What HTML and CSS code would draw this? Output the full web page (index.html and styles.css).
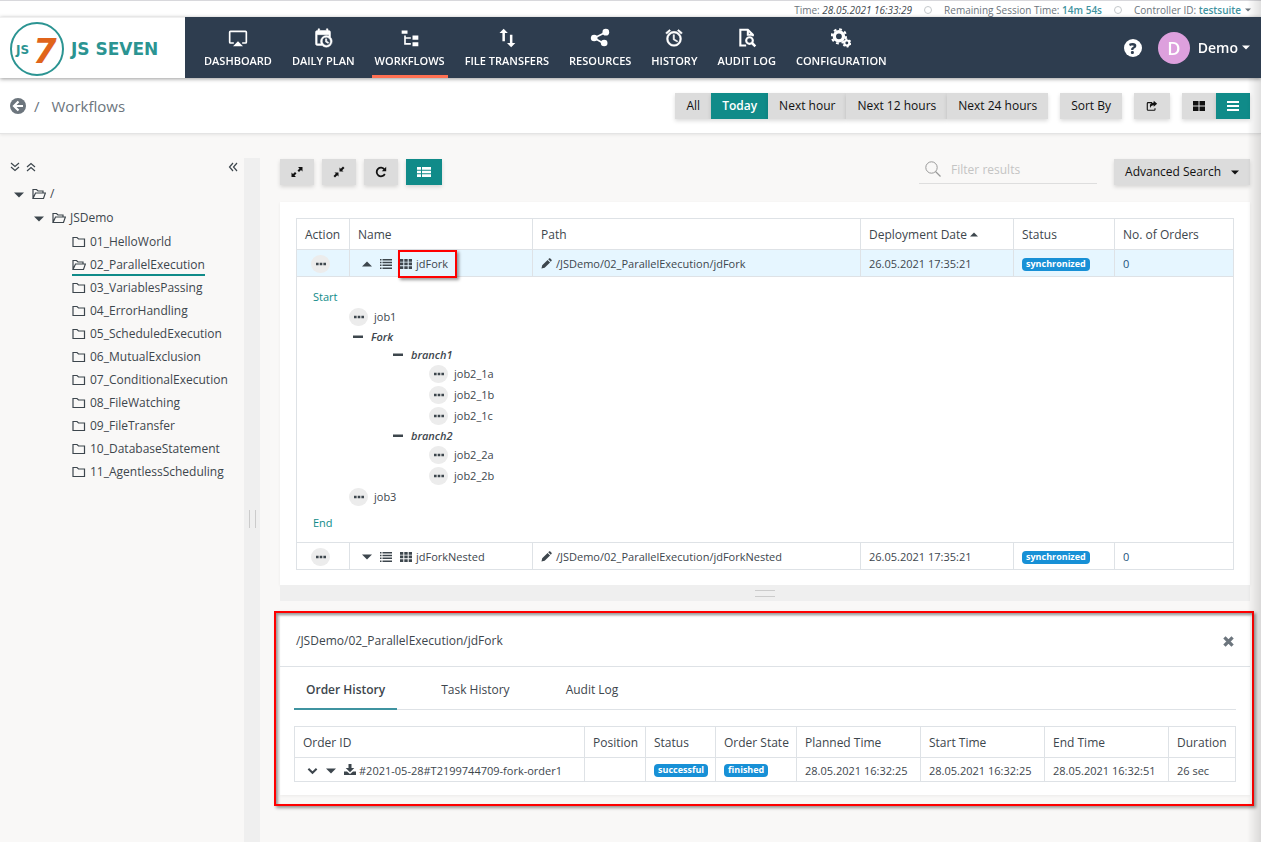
FILE: index.html
```
<!DOCTYPE html>
<html lang="en">
<head>
    <meta charset="UTF-8">
    <title>Workflows - JS7</title>
    <link rel="stylesheet" href="styles.css">
</head>
<body>
    <!-- icon sprite -->
    <svg class="sprite" aria-hidden="true">
        <symbol id="i-dashboard" viewBox="0 0 24 24"><path d="M6,22H18L12,16M21,3H3A2,2 0 0,0 1,5V17A2,2 0 0,0 3,19H7V17H3V5H21V17H17V19H21A2,2 0 0,0 23,17V5A2,2 0 0,0 21,3Z"/></symbol>
        <symbol id="i-plan" viewBox="0 0 24 24"><path d="M15,13H16.5V15.82L18.94,17.23L18.19,18.53L15,16.69V13M19,8H5V19H9.67C9.24,18.09 9,17.07 9,16A7,7 0 0,1 16,9C17.07,9 18.09,9.24 19,9.67V8M5,21C3.89,21 3,20.1 3,19V5C3,3.89 3.89,3 5,3H6V1H8V3H16V1H18V3H19A2,2 0 0,1 21,5V11.1C22.24,12.36 23,14.09 23,16A7,7 0 0,1 16,23C14.09,23 12.36,22.24 11.1,21H5M16,11.15A4.85,4.85 0 0,0 11.15,16C11.15,18.68 13.32,20.85 16,20.85A4.85,4.85 0 0,0 20.85,16C20.85,13.32 18.68,11.15 16,11.15Z" stroke="currentColor" stroke-width="0.600"/></symbol>
        <symbol id="i-tree" viewBox="0 0 24 24"><path d="M2,3H9V7H2V3M15,9H22V14H15V9M15,17H22V22H15V17M13,13H7V18H13V20H5V9H7V11H13V13Z"/></symbol>
        <symbol id="i-transfer" viewBox="0 0 24 24"><path d="M8,1L13,6H9.500V16H6.500V6H3L8,1M17,23L12,18H15.500V8H18.500V18H22L17,23Z"/></symbol>
        <symbol id="i-share" viewBox="0 0 24 24"><path d="M5,12L19,5M5,12L17,19" fill="none" stroke="currentColor" stroke-width="2"/><circle cx="5" cy="12" r="4"/><circle cx="19" cy="5" r="4"/><circle cx="17" cy="18" r="4"/></symbol>
        <symbol id="i-alarm" viewBox="0 0 24 24"><path d="M12,20A7,7 0 0,1 5,13A7,7 0 0,1 12,6A7,7 0 0,1 19,13A7,7 0 0,1 12,20M12,4A9,9 0 0,0 3,13A9,9 0 0,0 12,22A9,9 0 0,0 21,13A9,9 0 0,0 12,4M12.5,8H11V14L15.75,16.85L16.5,15.62L12.5,13.25V8M7.88,3.39L6.6,1.86L2,5.71L3.29,7.24L7.88,3.39M22,5.72L17.4,1.86L16.11,3.39L20.71,7.25L22,5.72Z" stroke="currentColor" stroke-width="0.600"/></symbol>
        <symbol id="i-audit" viewBox="0 0 24 24"><path d="M11,21H4V2H13L19,8V10M13,2V8H19" fill="none" stroke="currentColor" stroke-width="2.500"/><circle cx="15" cy="15" r="4" fill="none" stroke="currentColor" stroke-width="2.500"/><path d="M18,18L22,22" stroke="currentColor" stroke-width="3"/></symbol>
        <symbol id="i-cogs" viewBox="0 0 24 24"><circle cx="9.500" cy="10" r="5.500" fill="none" stroke="currentColor" stroke-width="4"/><circle cx="9.500" cy="10" r="8.500" fill="none" stroke="currentColor" stroke-width="2.500" stroke-dasharray="3.340 3.340"/><circle cx="19" cy="18" r="3" fill="none" stroke="currentColor" stroke-width="2.500"/><circle cx="19" cy="18" r="4.500" fill="none" stroke="currentColor" stroke-width="2" stroke-dasharray="2.360 2.360"/></symbol>
        <symbol id="i-back" viewBox="0 0 16 16"><circle cx="8" cy="8" r="8"/><path d="M8.500,3.500L4,8L8.500,12.500M4,8H13" fill="none" stroke="#fff" stroke-width="2.200"/></symbol>
        <symbol id="i-export" viewBox="0 0 14 14"><path d="M7,3H2.500Q1.500,3 1.500,4V11Q1.500,12 2.500,12H9.500Q10.500,12 10.500,11V9.500" fill="none" stroke="currentColor" stroke-width="1.300"/><path d="M9,1L13,4.500L9,8V6Q5.500,6 5,9.500Q3,3.500 9,3Z"/></symbol>
        <symbol id="i-large" viewBox="0 0 12 12"><path d="M0,1H5.500V5.500H0ZM6.500,1H12V5.500H6.500ZM0,6.500H5.500V11H0ZM6.500,6.500H12V11H6.500Z"/></symbol>
        <symbol id="i-bars" viewBox="0 0 12 12"><path d="M0,1H12V3H0ZM0,5H12V7H0ZM0,9H12V11H0Z"/></symbol>
        <symbol id="i-expand" viewBox="0 0 12 12"><path d="M7,1H11.500V5.500L10,4L8,6L6.500,4.500L8.500,2.500ZM5,11H0.500V6.500L2,8L4,6L5.500,7.500L3.500,9.500Z"/></symbol>
        <symbol id="i-collapse" viewBox="0 0 12 12"><path d="M6.500,5.500V1.500L7.800,2.800L10,0.500L11.500,2L9.200,4.200L10.500,5.500ZM5.500,6.500V10.500L4.200,9.200L2,11.500L0.500,10L2.800,7.800L1.500,6.500Z"/></symbol>
        <symbol id="i-refresh" viewBox="0 0 12 12"><path d="M9.500,3.500A4.300,4.300 0 1 0 9.800,8" fill="none" stroke="currentColor" stroke-width="1.800"/><path d="M11.200,0.800V5.200H6.800Z"/></symbol>
        <symbol id="i-thlist" viewBox="0 0 14 12"><path d="M0,1H4V3.700H0ZM5,1H14V3.700H5ZM0,4.700H4V7.300H0ZM5,4.700H14V7.300H5ZM0,8.300H4V11H0ZM5,8.300H14V11H5Z"/></symbol>
        <symbol id="i-search" viewBox="0 0 16 16"><circle cx="6.500" cy="6.500" r="5.700" fill="none" stroke="currentColor"/><path d="M10.500,10.500L15.500,15.500" stroke="currentColor" stroke-width="1.300"/></symbol>
        <symbol id="i-ddown" viewBox="0 0 10 10"><path d="M1,1L5,4.500L9,1M1,5L5,8.500L9,5" fill="none" stroke="currentColor" stroke-width="1.200"/></symbol>
        <symbol id="i-dup" viewBox="0 0 10 10"><path d="M1,5L5,1.500L9,5M1,9L5,5.500L9,9" fill="none" stroke="currentColor" stroke-width="1.200"/></symbol>
        <symbol id="i-dleft" viewBox="0 0 10 10"><path d="M5,1L1.500,5L5,9M9,1L5.500,5L9,9" fill="none" stroke="currentColor" stroke-width="1.200"/></symbol>
        <symbol id="i-folder" viewBox="0 0 14 12"><path d="M1,1.500H5L6.500,3H12.500V10.500H1Z" fill="none" stroke="currentColor" stroke-width="1.200"/></symbol>
        <symbol id="i-open" viewBox="0 0 14 12"><path d="M1,10.500V1.500H4.500L6,3H11V5M1,10.500L3.500,5H13.400L11.500,10.500Z" fill="none" stroke="currentColor" stroke-width="1.200"/></symbol>
        <symbol id="i-down" viewBox="0 0 10 6"><path d="M0,0.500H10L5,5.500Z"/></symbol>
        <symbol id="i-up" viewBox="0 0 10 6"><path d="M0,5.500H10L5,0.500Z"/></symbol>
        <symbol id="i-list" viewBox="0 0 12 10"><path d="M0,0H1.500V1.500H0ZM2.500,0H12V1.500H2.500ZM0,2.800H1.500V4.300H0ZM2.500,2.800H12V4.300H2.500ZM0,5.600H1.500V7.100H0ZM2.500,5.600H12V7.100H2.500ZM0,8.400H1.500V9.900H0ZM2.500,8.400H12V9.900H2.500Z"/></symbol>
        <symbol id="i-grid" viewBox="0 0 12 10"><path d="M0,0H3.300V2.700H0ZM4.300,0H7.700V2.700H4.300ZM8.700,0H12V2.700H8.700ZM0,3.600H3.300V6.300H0ZM4.300,3.600H7.700V6.300H4.300ZM8.700,3.600H12V6.300H8.700ZM0,7.200H3.300V9.900H0ZM4.300,7.200H7.700V9.900H4.300ZM8.700,7.200H12V9.900H8.700Z"/></symbol>
        <symbol id="i-pencil" viewBox="0 0 12 12"><path d="M0.500,11.500L1.300,8L7.200,2.100L9.900,4.800L4,10.700ZM7.900,1.400L9,0.400Q9.600,0 10.200,0.500L11.500,1.800Q12,2.400 11.600,3L10.600,4.100Z"/></symbol>
        <symbol id="i-dots" viewBox="0 0 12 4"><path d="M1,0.700H3.600V3.300H1ZM4.700,0.700H7.300V3.300H4.700ZM8.400,0.700H11V3.300H8.400Z"/></symbol>
        <symbol id="i-minus" viewBox="0 0 10 4"><path d="M0,0.500H10V3H0Z"/></symbol>
        <symbol id="i-close" viewBox="0 0 10 10"><path d="M1.300,1.300L8.700,8.700M8.700,1.300L1.300,8.700" stroke="currentColor" stroke-width="3"/></symbol>
        <symbol id="i-chevron" viewBox="0 0 12 8"><path d="M1.500,1.500L6,6L10.500,1.500" fill="none" stroke="currentColor" stroke-width="2.200"/></symbol>
        <symbol id="i-download" viewBox="0 0 12 12"><path d="M4.500,0H7.500V4H10.300L6,8.300L1.700,4H4.500ZM0,7.500H3L6,10L9,7.500H12V11H0Z"/></symbol>
    </svg>

    <div class="status-bar">
        <span>Time: <em>28.05.2021 16:33:29</em></span>
        <span class="ring"></span>
        <span>Remaining Session Time: <b>14m 54s</b></span>
        <span class="ring"></span>
        <span>Controller ID: <a href="#">testsuite</a></span>
        <svg class="caret-sm"><use href="#i-down"/></svg>
    </div>

    <header class="header">
        <a href="#" class="logo" aria-label="JS Seven">
            <svg width="165" height="56" viewBox="0 0 165 56">
                <circle cx="27" cy="27" r="26" fill="#fff" stroke="#2b9492" stroke-width="2"/>
                <text x="23" y="41" class="logo-seven">7</text>
                <text x="6" y="32" class="logo-js">JS</text>
                <text x="61" y="33" class="logo-name">JS SEVEN</text>
            </svg>
        </a>
        <nav class="nav">
            <a href="#"><svg><use href="#i-dashboard"/></svg>DASHBOARD</a>
            <a href="#"><svg><use href="#i-plan"/></svg>DAILY PLAN</a>
            <a href="#" class="active"><svg><use href="#i-tree"/></svg>WORKFLOWS</a>
            <a href="#"><svg><use href="#i-transfer"/></svg>FILE TRANSFERS</a>
            <a href="#"><svg><use href="#i-share"/></svg>RESOURCES</a>
            <a href="#"><svg><use href="#i-alarm"/></svg>HISTORY</a>
            <a href="#"><svg><use href="#i-audit"/></svg>AUDIT LOG</a>
            <a href="#"><svg><use href="#i-cogs"/></svg>CONFIGURATION</a>
        </nav>
        <div class="user">
            <a href="#" class="help">?</a>
            <span class="avatar">D</span>
            <a href="#" class="user-name">Demo <svg><use href="#i-down"/></svg></a>
        </div>
    </header>

    <div class="title-bar">
        <button class="back" aria-label="Back"><svg><use href="#i-back"/></svg></button>
        <span class="slash">/</span>
        <span class="page-title">Workflows</span>
        <div class="actions">
            <div class="btn-group">
                <button class="btn">All</button>
                <button class="btn btn-on">Today</button>
                <button class="btn">Next hour</button>
                <button class="btn">Next 12 hours</button>
                <button class="btn">Next 24 hours</button>
            </div>
            <button class="btn">Sort By</button>
            <button class="btn btn-icon" aria-label="Export"><svg class="wide"><use href="#i-export"/></svg></button>
            <div class="btn-group">
                <button class="btn btn-icon" aria-label="Grid view"><svg><use href="#i-large"/></svg></button>
                <button class="btn btn-icon btn-on" aria-label="List view"><svg><use href="#i-bars"/></svg></button>
            </div>
        </div>
    </div>

    <div class="page">
        <aside class="sidebar">
            <div class="tree-tools">
                <button aria-label="Expand all"><svg><use href="#i-ddown"/></svg></button>
                <button aria-label="Collapse all"><svg><use href="#i-dup"/></svg></button>
                <button class="hide" aria-label="Hide panel"><svg><use href="#i-dleft"/></svg></button>
            </div>
            <ul class="tree">
                <li class="root"><svg class="caret"><use href="#i-down"/></svg><a href="#"><svg><use href="#i-open"/></svg>/</a></li>
                <li class="sub"><svg class="caret"><use href="#i-down"/></svg><a href="#"><svg><use href="#i-open"/></svg>JSDemo</a></li>
                <li><a href="#"><svg><use href="#i-folder"/></svg>01_HelloWorld</a></li>
                <li><a href="#" class="selected"><svg><use href="#i-open"/></svg>02_ParallelExecution</a></li>
                <li><a href="#"><svg><use href="#i-folder"/></svg>03_VariablesPassing</a></li>
                <li><a href="#"><svg><use href="#i-folder"/></svg>04_ErrorHandling</a></li>
                <li><a href="#"><svg><use href="#i-folder"/></svg>05_ScheduledExecution</a></li>
                <li><a href="#"><svg><use href="#i-folder"/></svg>06_MutualExclusion</a></li>
                <li><a href="#"><svg><use href="#i-folder"/></svg>07_ConditionalExecution</a></li>
                <li><a href="#"><svg><use href="#i-folder"/></svg>08_FileWatching</a></li>
                <li><a href="#"><svg><use href="#i-folder"/></svg>09_FileTransfer</a></li>
                <li><a href="#"><svg><use href="#i-folder"/></svg>10_DatabaseStatement</a></li>
                <li><a href="#"><svg><use href="#i-folder"/></svg>11_AgentlessScheduling</a></li>
            </ul>
        </aside>
        <div class="splitter"><span></span></div>

        <main class="content">
            <div class="toolbar">
                <button class="btn btn-icon" aria-label="Expand"><svg><use href="#i-expand"/></svg></button>
                <button class="btn btn-icon" aria-label="Collapse"><svg><use href="#i-collapse"/></svg></button>
                <button class="btn btn-icon" aria-label="Refresh"><svg><use href="#i-refresh"/></svg></button>
                <button class="btn btn-icon btn-on" aria-label="Table"><svg class="wide"><use href="#i-thlist"/></svg></button>
                <label class="filter">
                    <svg><use href="#i-search"/></svg>
                    <input type="text" placeholder="Filter results" aria-label="Filter results">
                </label>
                <button class="btn">Advanced Search <svg class="btn-caret"><use href="#i-down"/></svg></button>
            </div>

            <section class="panel workflows">
                <table class="grid">
                    <colgroup>
                        <col class="c-action"><col class="c-name"><col><col class="c-date"><col class="c-sync"><col class="c-orders">
                    </colgroup>
                    <thead>
                        <tr>
                            <th>Action</th>
                            <th>Name</th>
                            <th>Path</th>
                            <th>Deployment Date <svg class="sort"><use href="#i-up"/></svg></th>
                            <th>Status</th>
                            <th>No. of Orders</th>
                        </tr>
                    </thead>
                    <tbody>
                        <tr class="row-on">
                            <td class="center"><button class="dots" aria-label="Actions"><svg><use href="#i-dots"/></svg></button></td>
                            <td>
                                <div class="name-cell">
                                    <svg class="caret"><use href="#i-up"/></svg>
                                    <svg class="ic"><use href="#i-list"/></svg>
                                    <a href="#" class="marked"><svg class="ic"><use href="#i-grid"/></svg>jdFork</a>
                                </div>
                            </td>
                            <td><svg class="pencil"><use href="#i-pencil"/></svg>/JSDemo/02_ParallelExecution/jdFork</td>
                            <td>26.05.2021 17:35:21</td>
                            <td><span class="badge">synchronized</span></td>
                            <td><a href="#" class="count">0</a></td>
                        </tr>
                        <tr>
                            <td colspan="6" class="flow">
                                <div class="edge">Start</div>
                                <div class="job"><button class="dots" aria-label="Actions"><svg><use href="#i-dots"/></svg></button>job1</div>
                                <div class="group"><svg><use href="#i-minus"/></svg>Fork</div>
                                <div class="nest">
                                    <div class="group"><svg><use href="#i-minus"/></svg>branch1</div>
                                    <div class="nest">
                                        <div class="job"><button class="dots" aria-label="Actions"><svg><use href="#i-dots"/></svg></button>job2_1a</div>
                                        <div class="job"><button class="dots" aria-label="Actions"><svg><use href="#i-dots"/></svg></button>job2_1b</div>
                                        <div class="job"><button class="dots" aria-label="Actions"><svg><use href="#i-dots"/></svg></button>job2_1c</div>
                                    </div>
                                    <div class="group"><svg><use href="#i-minus"/></svg>branch2</div>
                                    <div class="nest">
                                        <div class="job"><button class="dots" aria-label="Actions"><svg><use href="#i-dots"/></svg></button>job2_2a</div>
                                        <div class="job"><button class="dots" aria-label="Actions"><svg><use href="#i-dots"/></svg></button>job2_2b</div>
                                    </div>
                                </div>
                                <div class="job"><button class="dots" aria-label="Actions"><svg><use href="#i-dots"/></svg></button>job3</div>
                                <div class="edge end">End</div>
                            </td>
                        </tr>
                        <tr>
                            <td class="center"><button class="dots" aria-label="Actions"><svg><use href="#i-dots"/></svg></button></td>
                            <td>
                                <div class="name-cell">
                                    <svg class="caret"><use href="#i-down"/></svg>
                                    <svg class="ic"><use href="#i-list"/></svg>
                                    <a href="#"><svg class="ic"><use href="#i-grid"/></svg>jdForkNested</a>
                                </div>
                            </td>
                            <td><svg class="pencil"><use href="#i-pencil"/></svg>/JSDemo/02_ParallelExecution/jdForkNested</td>
                            <td>26.05.2021 17:35:21</td>
                            <td><span class="badge">synchronized</span></td>
                            <td><a href="#" class="count">0</a></td>
                        </tr>
                    </tbody>
                </table>
            </section>
            <div class="resizer"><span></span></div>

            <section class="panel detail">
                <div class="detail-head">
                    <span>/JSDemo/02_ParallelExecution/jdFork</span>
                    <button aria-label="Close"><svg><use href="#i-close"/></svg></button>
                </div>
                <div class="detail-body">
                    <div class="tabs">
                        <a href="#" class="active">Order History</a>
                        <a href="#">Task History</a>
                        <a href="#">Audit Log</a>
                    </div>
                    <table class="grid history">
                        <colgroup>
                            <col><col class="c-pos"><col class="c-status"><col class="c-state"><col class="c-time"><col class="c-time"><col class="c-time"><col class="c-dur">
                        </colgroup>
                        <thead>
                            <tr>
                                <th>Order ID</th>
                                <th>Position</th>
                                <th>Status</th>
                                <th>Order State</th>
                                <th>Planned Time</th>
                                <th>Start Time</th>
                                <th>End Time</th>
                                <th>Duration</th>
                            </tr>
                        </thead>
                        <tbody>
                            <tr>
                                <td>
                                    <div class="order-cell">
                                        <svg class="chev"><use href="#i-chevron"/></svg>
                                        <svg class="caret"><use href="#i-down"/></svg>
                                        <span><svg class="dl"><use href="#i-download"/></svg>#2021-05-28#T2199744709-fork-order1</span>
                                    </div>
                                </td>
                                <td></td>
                                <td><span class="badge">successful</span></td>
                                <td><span class="badge">finished</span></td>
                                <td>28.05.2021 16:32:25</td>
                                <td>28.05.2021 16:32:25</td>
                                <td>28.05.2021 16:32:51</td>
                                <td>26 sec</td>
                            </tr>
                        </tbody>
                    </table>
                </div>
            </section>
        </main>
    </div>
</body>
</html>
```
FILE: styles.css
```
* {
    box-sizing: border-box;
}
body {
    margin: 0;
    min-height: 100vh;
    display: flex;
    flex-direction: column;
    font-family: "Open Sans", "Noto Sans", sans-serif;
    font-size: 12px;
    line-height: 18px;
    color: #3d464d;
    background: #f9f8f7;
    border-top: 1px solid #d8d8dc;
}
/* soft shade along the right window edge */
body::after {
    content: "";
    position: fixed;
    top: 0;
    right: 0;
    bottom: 0;
    width: 14px;
    background: linear-gradient(to right, rgba(0, 0, 0, 0), rgba(0, 0, 0, 0.12));
    pointer-events: none;
}
a {
    color: inherit;
    text-decoration: none;
}
svg {
    fill: currentColor;
    flex: none;
}
button {
    font: inherit;
    color: inherit;
    border: none;
    background: none;
    padding: 0;
}
.sprite {
    position: absolute;
    width: 0;
    height: 0;
}

/* status bar */
.status-bar {
    display: flex;
    justify-content: flex-end;
    align-items: center;
    height: 16px;
    padding: 2px 10px 0 0;
    gap: 12px;
    font-size: 10px;
    line-height: 14px;
    color: #6c757d;
    background: #fff;
}
.status-bar em {
    color: #3d464d;
}
.status-bar b,
.status-bar a {
    font-weight: 600;
    color: #3f93a0;
}
.ring {
    width: 8px;
    height: 8px;
    border: 1px solid #c4c8cb;
    border-radius: 50%;
}
.caret-sm {
    width: 6px;
    height: 4px;
    margin-left: -8px;
}

/* header */
.header {
    display: flex;
    height: 61px;
    background: #2e3d4f;
    color: #fff;
    box-shadow: 0 1px 4px rgba(0, 0, 0, 0.4);
    position: relative;
    z-index: 1;
}
.logo {
    width: 185px;
    padding: 4px 10px 0;
    background: #fff;
    border-top: 1px solid #f0f0f0;
}
.logo-seven {
    font: italic bold 34px "DejaVu Sans", sans-serif;
    fill: #e0641b;
}
.logo-js {
    font: bold 12px "DejaVu Sans", sans-serif;
    fill: #2b9492;
}
.logo-name {
    font: bold 17px "DejaVu Sans", sans-serif;
    fill: #2b9492;
}
.nav {
    display: flex;
    gap: 14px;
    padding-left: 16px;
    white-space: nowrap;
}
.nav a {
    display: flex;
    flex-direction: column;
    align-items: center;
    padding: 11px 3px 0;
    gap: 4px;
    font-size: 11px;
    font-weight: 600;
    border-bottom: 3px solid transparent;
}
.nav a.active {
    border-color: #ff7052;
}
.nav svg {
    width: 20px;
    height: 20px;
}
.user {
    display: flex;
    align-items: center;
    margin-left: auto;
    padding-right: 11px;
}
.help {
    width: 18px;
    height: 18px;
    border-radius: 50%;
    background: #fff;
    color: #2e3d4f;
    font-size: 15px;
    font-weight: 800;
    text-align: center;
}
.avatar {
    width: 32px;
    height: 32px;
    margin: 0 8px 0 16px;
    border-radius: 50%;
    background: #dda0dd;
    font-size: 18px;
    font-weight: 600;
    line-height: 32px;
    text-align: center;
}
.user-name {
    display: flex;
    align-items: center;
    gap: 4px;
    font-size: 14px;
    font-weight: 600;
}
.user-name svg {
    width: 8px;
    height: 5px;
}

/* title bar */
.title-bar {
    display: flex;
    align-items: center;
    height: 56px;
    padding: 0 11px 0 10px;
    background: #fff;
    border-bottom: 1px solid #e4e4e4;
    box-shadow: 0 1px 3px rgba(0, 0, 0, 0.08);
    color: #6c757d;
    font-size: 15px;
}
.back svg {
    display: block;
    width: 16px;
    height: 16px;
}
.slash {
    margin: 0 12px 0 8px;
}
.actions {
    display: flex;
    gap: 12px;
    margin-left: auto;
}
.btn-group {
    display: flex;
}
.btn {
    display: flex;
    align-items: center;
    justify-content: center;
    height: 26px;
    padding: 0 11px;
    font-size: 12px;
    white-space: nowrap;
    color: #111;
    background: #dcdcdc;
    box-shadow: 0 2px 4px rgba(0, 0, 0, 0.14);
}
.btn svg {
    width: 12px;
    height: 12px;
}
.btn .wide {
    width: 14px;
}
.btn .btn-caret {
    width: 8px;
    height: 5px;
    margin-left: 10px;
}
.btn-on {
    color: #fff;
    font-weight: 600;
    background: #108b89;
}

/* page */
.page {
    display: flex;
    flex: 1;
    padding-top: 24px;
}
.sidebar {
    width: 244px;
}
.tree-tools {
    display: flex;
    align-items: center;
    gap: 6px;
    height: 18px;
    padding: 0 6px 0 10px;
}
.tree-tools svg {
    display: block;
    width: 10px;
    height: 10px;
}
.tree-tools .hide {
    margin-left: auto;
}
.tree {
    list-style: none;
    margin: 7px 0 0;
    padding: 0;
}
.tree li {
    display: flex;
    align-items: center;
    height: 23px;
    padding-left: 72px;
}
.tree .root,
.tree .sub {
    height: 24px;
    padding-left: 14px;
}
.tree .sub {
    padding-left: 34px;
}
.tree a {
    display: flex;
    align-items: center;
    gap: 4px;
    border-bottom: 2px solid transparent;
}
.tree a.selected {
    border-color: #108b89;
}
.tree a svg {
    width: 14px;
    height: 12px;
}
.tree .caret {
    margin-right: 8px;
}
.caret {
    width: 10px;
    height: 6px;
}
.splitter {
    display: flex;
    justify-content: center;
    width: 16px;
    background: #efefef;
}
.splitter span {
    width: 7px;
    height: 18px;
    margin-top: 352px;
    border: solid #cbcbcb;
    border-width: 0 1px;
}
.content {
    flex: 1;
    min-width: 0;
    padding: 1px 11px 0 20px;
}
.toolbar {
    display: flex;
    gap: 8px;
    margin-bottom: 17px;
}
.filter {
    display: flex;
    gap: 10px;
    width: 178px;
    height: 25px;
    margin: 0 9px 0 auto;
    padding-left: 6px;
    border-bottom: 1px solid #dedede;
    color: #999;
}
.filter svg {
    width: 16px;
    height: 16px;
    margin-top: 2px;
}
.filter input {
    width: 100%;
    height: 20px;
    padding: 0;
    border: none;
    outline: none;
    background: none;
    font: inherit;
}
.filter input::placeholder {
    color: #c4c4c4;
}
.panel {
    background: #fff;
    box-shadow: 0 1px 3px rgba(0, 0, 0, 0.06);
}
.workflows {
    padding: 16px 16px 15px;
}

/* tables */
.grid {
    width: 100%;
    table-layout: fixed;
    border-collapse: collapse;
}
.grid th,
.grid td {
    border: 1px solid #dee2e6;
    padding: 2px 8px 0;
    text-align: left;
    white-space: nowrap;
}
.grid th {
    height: 31px;
    font-weight: 500;
}
.grid td {
    height: 27px;
    font-size: 11px;
}
.grid td.center {
    padding: 1px 14px 0;
}
.row-on {
    background: #e6f6ff;
}
.c-action { width: 53px; }
.c-name { width: 183px; }
.c-date { width: 153px; }
.c-sync { width: 101px; }
.c-orders { width: 119px; }
.c-pos { width: 61px; }
.c-status { width: 70px; }
.c-state { width: 81px; }
.c-time { width: 124px; }
.c-dur { width: 67px; }
.sort {
    width: 8px;
    height: 5px;
    vertical-align: 2px;
}
.dots {
    display: flex;
    align-items: center;
    justify-content: center;
    width: 19px;
    height: 18px;
    border-radius: 9px;
    background: #ececec;
}
.dots svg {
    width: 12px;
    height: 4px;
}
.name-cell,
.order-cell {
    display: flex;
    align-items: center;
    gap: 8px;
    padding-left: 4px;
}
.name-cell a {
    display: flex;
    align-items: center;
    gap: 4px;
}
.ic {
    width: 12px;
    height: 10px;
}
.marked {
    position: relative;
}
/* red callout frames */
.marked::after,
.detail::after {
    content: "";
    position: absolute;
    inset: -5px -9px -5px -2px;
    border: 2px solid #ff0000;
    box-shadow: 2px 2px 3px rgba(0, 0, 0, 0.4);
    pointer-events: none;
}
.pencil {
    width: 11px;
    height: 11px;
    margin-right: 4px;
    vertical-align: -1px;
}
.badge {
    display: block;
    width: max-content;
    height: 13px;
    padding: 0 4px;
    border-radius: 4px;
    background: #1790d6;
    color: #fff;
    font-size: 9px;
    font-weight: 700;
    line-height: 12px;
}
.count {
    color: #23527c;
}

/* workflow steps */
.grid .flow {
    height: 266px;
    padding: 11px 16px 9px;
    vertical-align: top;
}
.edge {
    color: #108b89;
}
.end {
    margin-top: 7px;
}
.job,
.group {
    display: flex;
    align-items: center;
    gap: 6px;
    height: 21px;
    margin-left: 36px;
}
.group {
    height: 18px;
    margin-left: 40px;
    padding-top: 2px;
    gap: 8px;
    font-style: italic;
    font-weight: 600;
}
.group svg {
    width: 10px;
    height: 4px;
}
.nest {
    margin-left: 40px;
}

.resizer {
    display: flex;
    justify-content: center;
    align-items: center;
    height: 16px;
    background: #efefef;
}
.resizer span {
    width: 20px;
    height: 7px;
    border: solid #cbcbcb;
    border-width: 1px 0;
}

/* detail panel */
.detail {
    position: relative;
    margin-top: 15px;
}
.detail::after {
    inset: -5px -4px -11px -6px;
    box-shadow: 2px 2px 3px rgba(0, 0, 0, 0.4), inset 2px 2px 3px rgba(0, 0, 0, 0.4);
}
.detail-head {
    display: flex;
    align-items: center;
    justify-content: space-between;
    height: 51px;
    padding: 0 16px;
    border-bottom: 1px solid #dee2e6;
}
.detail-head svg {
    display: block;
    width: 11px;
    height: 11px;
    color: #6c757d;
}
.detail-body {
    padding: 4px 14px 13px;
}
.tabs {
    display: flex;
    gap: 32px;
    height: 39px;
    margin-bottom: 16px;
    border-bottom: 1px solid #dee2e6;
}
.tabs a {
    padding: 10px 12px 0;
    height: 39px;
}
.tabs a.active {
    font-weight: 600;
    border-bottom: 2px solid #3f93a0;
}
.history td {
    height: 24px;
}
.chev {
    width: 11px;
    height: 8px;
}
.dl {
    width: 12px;
    height: 12px;
    margin-right: 3px;
    vertical-align: -1px;
}
```
